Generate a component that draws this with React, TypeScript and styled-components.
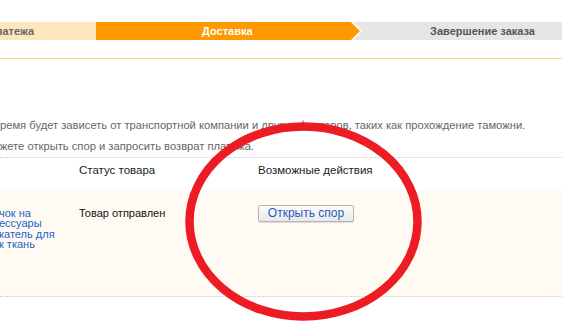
import React from 'react';
import styled, { createGlobalStyle, css } from 'styled-components';

const GlobalStyle = createGlobalStyle`
  html, body {
    margin: 0;
    padding: 0;
    background: #ffffff;
  }
  body {
    font-family: "Liberation Sans", Arial, sans-serif;
    font-size: 12px;
    color: #333333;
  }
`;

type StepKind = 'done' | 'active' | 'todo';

const stepColors: Record<StepKind, { bg: string; fg: string }> = {
  done: { bg: '#fde6bd', fg: '#666666' },
  active: { bg: '#fe9900', fg: '#ffffff' },
  todo: { bg: '#e6e6e6', fg: '#555555' },
};

const App: React.FC = (): React.ReactElement => {
  return (
    <>
      <GlobalStyle />
      <Page>
        <Steps>
          <Step $kind="done" $width={96} $arrow>
            <StepLabel $align="right" $pad={62}>Оплата платежа</StepLabel>
          </Step>
          <Step $kind="active" $width={255} $arrow>
            <StepLabel $align="left" $pad={106}>Доставка</StepLabel>
          </Step>
          <Step $kind="todo">
            <StepLabel $align="left" $pad={79}>Завершение заказа</StepLabel>
          </Step>
        </Steps>
        <GoldRule />
        <Notice>
          <NoticeLine $shift={-6}>
            время будет зависеть от транспортной компании и других факторов, таких как прохождение таможни.
          </NoticeLine>
          <NoticeLine $shift={-14}>
            можете открыть спор и запросить возврат платежа.
          </NoticeLine>
        </Notice>
        <Table>
          <HeaderRow>
            <Cell />
            <HeadCell>Статус товара</HeadCell>
            <HeadCell>Возможные действия</HeadCell>
          </HeaderRow>
          <BodyRow>
            <LinkCell>
              <ItemLink>чок на</ItemLink>
              <ItemLink>ессуары</ItemLink>
              <ItemLink>катель для</ItemLink>
              <ItemLink>к ткань</ItemLink>
            </LinkCell>
            <StatusCell>Товар отправлен</StatusCell>
            <ActionCell>
              <DisputeButton type="button">Открыть спор</DisputeButton>
            </ActionCell>
          </BodyRow>
        </Table>
        <Watermark>Харьков Форум</Watermark>
        <Annotation width="562" height="333" viewBox="0 0 562 333">
          <ellipse cx="303.5" cy="221.5" rx="114" ry="95" fill="none" stroke="#ed1c24" strokeWidth="8.5" />
        </Annotation>
      </Page>
    </>
  );
};

const Page = styled.div`
  position: relative;
  width: 562px;
  height: 333px;
  overflow: hidden;
  background: #ffffff;
`;

const Steps = styled.div`
  display: flex;
  height: 18px;
  margin-top: 22px;
`;

const Step = styled.div<{ $kind: StepKind; $width?: number; $arrow?: boolean }>`
  position: relative;
  flex: ${(p) => (p.$width ? `0 0 ${p.$width}px` : '1 1 auto')};
  min-width: 0;
  display: flex;
  background: ${(p) => stepColors[p.$kind].bg};
  color: ${(p) => stepColors[p.$kind].fg};
  ${(p) =>
    p.$arrow &&
    css`
      z-index: 1;
      &::before {
        content: '';
        position: absolute;
        top: 0;
        left: 100%;
        width: 12px;
        height: 18px;
        background: #ffffff;
        clip-path: polygon(0 0, 2px 0, 11px 50%, 2px 100%, 0 100%);
      }
      &::after {
        content: '';
        position: absolute;
        top: 0;
        left: 100%;
        width: 9px;
        height: 18px;
        background: ${stepColors[p.$kind].bg};
        clip-path: polygon(0 0, 9px 50%, 0 100%);
      }
    `}
`;

const StepLabel = styled.span<{ $align: 'left' | 'right'; $pad: number }>`
  flex: 1 1 auto;
  min-width: 0;
  overflow: hidden;
  display: flex;
  align-items: center;
  justify-content: ${(p) => (p.$align === 'right' ? 'flex-end' : 'flex-start')};
  ${(p) => (p.$align === 'right' ? `padding-right: ${p.$pad}px;` : `padding-left: ${p.$pad}px;`)}
  font-weight: bold;
  font-size: 11px;
  white-space: nowrap;
`;

const GoldRule = styled.div`
  margin-top: 18px;
  height: 1px;
  background: #f4d88e;
`;

const Notice = styled.div`
  padding-top: 56px;
  color: #666666;
  font-size: 11.2px;
  line-height: 21px;
`;

const NoticeLine = styled.div<{ $shift: number }>`
  margin-left: ${(p) => p.$shift}px;
  white-space: nowrap;
`;

const Table = styled.div`
  border-top: 1px dotted #cccccc;
`;

const rowGrid = css`
  display: grid;
  grid-template-columns: 79px 179px 1fr;
`;

const HeaderRow = styled.div`
  ${rowGrid};
  height: 32px;
  padding-top: 5px;
  box-sizing: border-box;
`;

const Cell = styled.div``;

const HeadCell = styled.div`
  color: #222222;
  font-size: 11.5px;
  line-height: 14px;
  white-space: nowrap;
`;

const BodyRow = styled.div`
  ${rowGrid};
  height: 107px;
  box-sizing: border-box;
  background: #fffbf3;
  border-bottom: 1px dotted #cccccc;
`;

const LinkCell = styled.div`
  display: flex;
  flex-direction: column;
  padding-top: 18px;
  margin-left: -1px;
`;

const ItemLink = styled.a`
  color: #1d5fcc;
  font-size: 11px;
  line-height: 10.4px;
  white-space: nowrap;
  cursor: pointer;
`;

const StatusCell = styled.div`
  padding-top: 17px;
  font-size: 11px;
  line-height: 12px;
  color: #111111;
`;

const ActionCell = styled.div`
  padding-top: 15px;
`;

const DisputeButton = styled.button`
  display: block;
  width: 96px;
  height: 17px;
  padding: 0;
  border: 1px solid #b4b4b4;
  border-radius: 2px;
  background: linear-gradient(#fdfdfd, #e9e9e9);
  box-shadow: 0 1px 1px rgba(0, 0, 0, 0.12);
  color: #1f5bbf;
  font-family: "Liberation Sans", Arial, sans-serif;
  font-size: 12px;
  line-height: 15px;
`;

const Watermark = styled.div`
  position: absolute;
  left: 421px;
  top: 274px;
  font-family: "Liberation Serif", "Times New Roman", serif;
  font-size: 18px;
  color: rgba(255, 255, 255, 0.85);
  white-space: nowrap;
  pointer-events: none;
`;

const Annotation = styled.svg`
  position: absolute;
  left: 0;
  top: 0;
  pointer-events: none;
`;

export default App;
